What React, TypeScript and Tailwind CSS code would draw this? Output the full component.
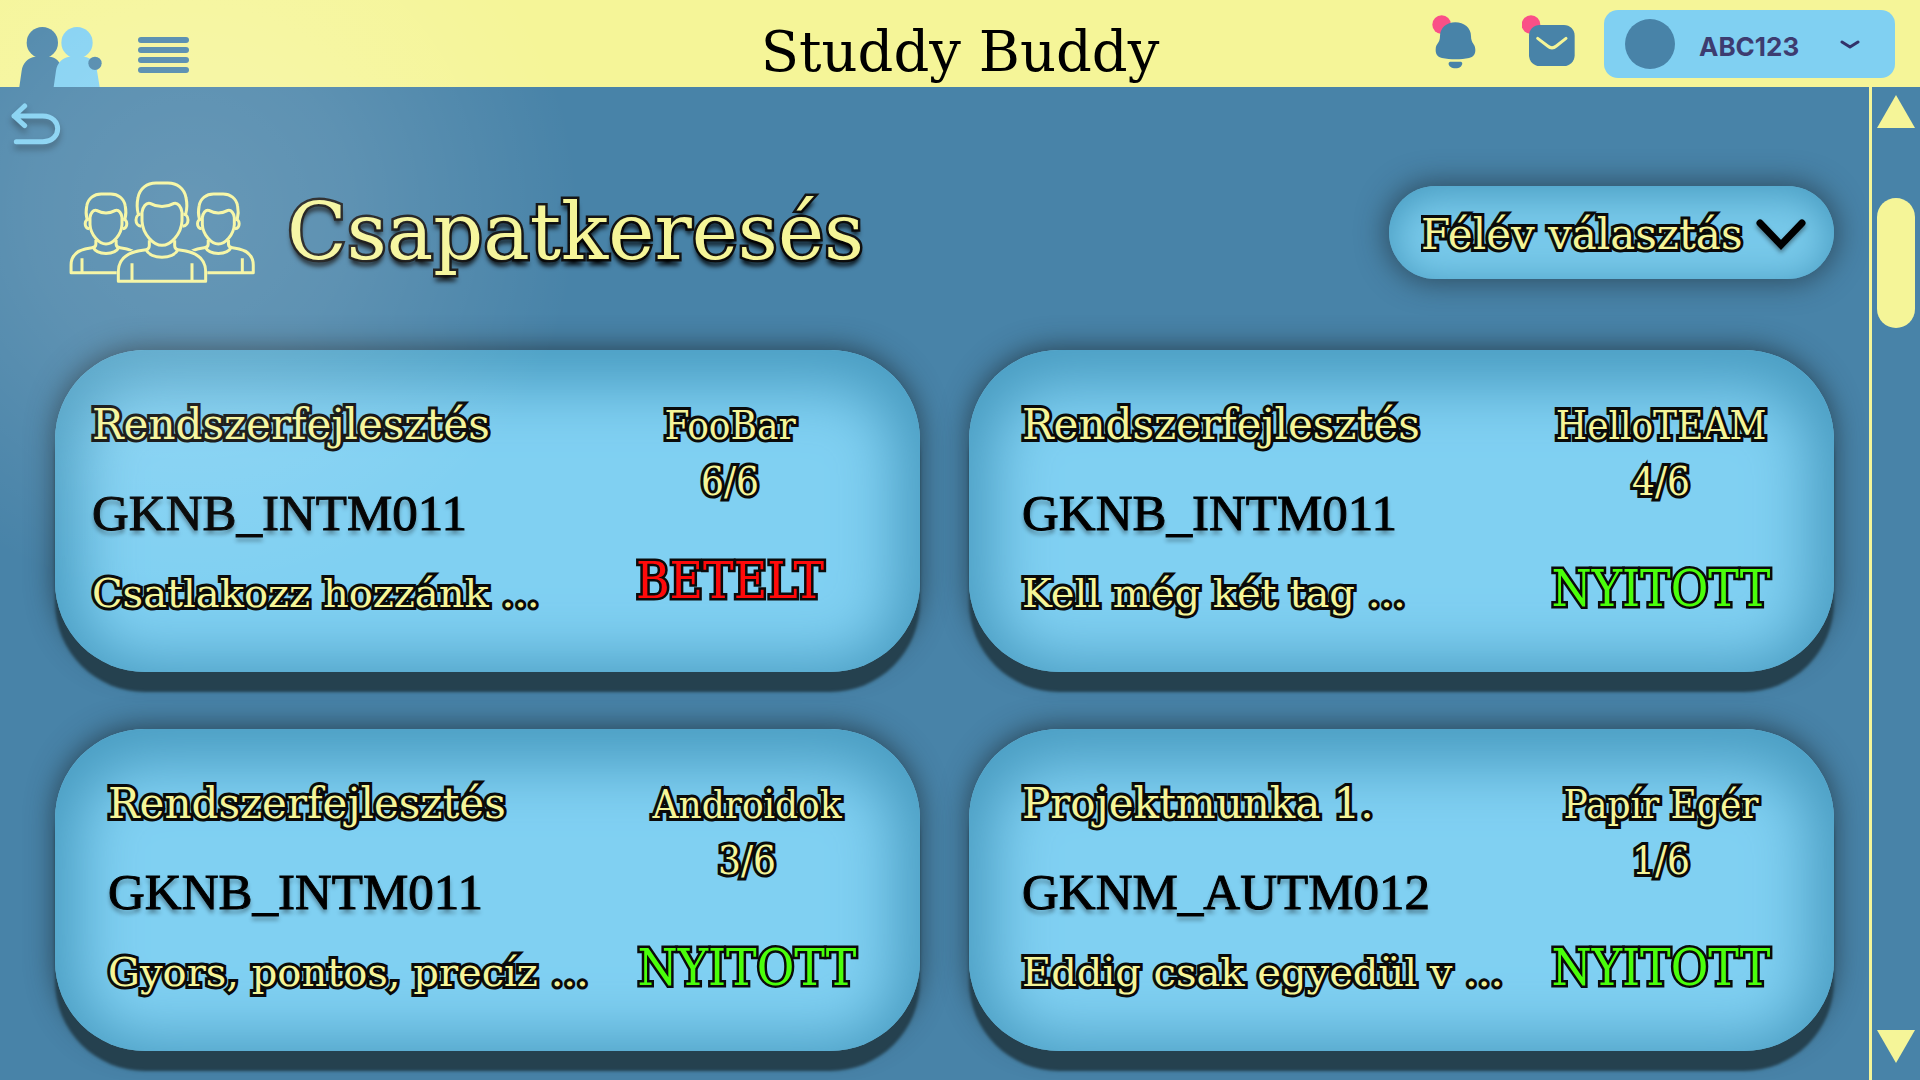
import React from "react";

const HAND = "font-['DejaVu_Serif',serif]";
const HAND_NARROW = "font-['DejaVu_Serif_Condensed','DejaVu_Serif',serif]";
const OUTLINE = "[-webkit-text-stroke:6px_#0a0a0a] [paint-order:stroke_fill]";

type Team = {
  subject: string;
  code: string;
  note: string;
  team: string;
  members: string;
  open: boolean;
};

const teams: Team[] = [
  { subject: "Rendszerfejlesztés", code: "GKNB_INTM011", note: "Csatlakozz hozzánk ...", team: "FooBar", members: "6/6", open: false },
  { subject: "Rendszerfejlesztés", code: "GKNB_INTM011", note: "Kell még két tag ...", team: "HelloTEAM", members: "4/6", open: true },
  { subject: "Rendszerfejlesztés", code: "GKNB_INTM011", note: "Gyors, pontos, precíz ...", team: "Androidok", members: "3/6", open: true },
  { subject: "Projektmunka 1.", code: "GKNM_AUTM012", note: "Eddig csak egyedül v ...", team: "Papír Egér", members: "1/6", open: true },
];

function Logo() {
  return (
    <svg className="h-[60px] w-[84px]" viewBox="54 81 252 180" aria-label="Studdy Buddy">
      <g fill="#4883a8">
        <circle cx="127" cy="128" r="47" />
        <path d="M58 261 L65 212 C68 190 84 172 106 170 H148 C164 171 176 180 184 198 V261Z" />
      </g>
      <g fill="#80d0f2">
        <circle cx="231" cy="128" r="47" />
        <path d="M161 261 L168 212 C171 190 187 172 209 170 H252 C274 172 288 190 291 212 L299 261Z" />
      </g>
      <circle cx="285" cy="190" r="20" fill="#4883a8" />
    </svg>
  );
}

function Student({ scale }: { scale: number }) {
  const w = 9 / scale;
  return (
    <g transform={`scale(${scale})`} fill="none" stroke="#f5f598" strokeWidth={w} strokeLinejoin="round">
      <path d="M-71 98 C-76 80 -75 62 -72 48 C-67 20 -45 4 -18 4 H18 C45 4 67 20 72 48 C75 62 76 80 71 98" />
      <path d="M-60 92 C-58 76 -48 62 -36 65 C-12 78 12 78 36 65 C48 62 58 76 60 92 V118 C58 158 25 191 0 191 C-25 191 -58 158 -60 118Z" />
      <path d="M-64 98 C-82 98 -84 132 -62 134 M64 98 C82 98 84 132 62 134" />
      <path d="M-38 176 V192 C-38 202 -44 204 -53 205 C-100 210 -131 228 -131 270 V299 H131 V270 C131 228 100 210 53 205 C44 204 38 202 38 192 V176" />
      <path d="M-48 204 C-34 234 34 234 48 204" />
      <path d="M-90 245 V299 M90 245 V299" />
    </g>
  );
}

function GroupIcon() {
  return (
    <svg className="h-[102px] w-[186px] shrink-0" viewBox="55 66 558 306" aria-hidden="true">
      <defs>
        <clipPath id="sides">
          <path d="M50 60 H248 V272 C215 285 200 305 198 330 V372 H50Z M618 60 H422 V272 C455 285 468 305 470 330 V372 H618Z" />
        </clipPath>
      </defs>
      <g clipPath="url(#sides)">
        <g transform="translate(166 102)">
          <Student scale={0.8} />
        </g>
        <g transform="translate(503 102)">
          <Student scale={0.8} />
        </g>
      </g>
      <g transform="translate(334 68)">
        <Student scale={1} />
      </g>
    </svg>
  );
}

function Header() {
  return (
    <header className="grid h-[87px] grid-cols-[1fr_auto_1fr] bg-[#f5f598]">
      <div className="flex items-end pl-[18px]">
        <Logo />
        <button type="button" aria-label="Menü" className="mb-[14px] ml-9 flex w-[51px] flex-col gap-1">
          <span className="h-1.5 w-full rounded-full bg-[#4883a8]" />
          <span className="h-1.5 w-full rounded-full bg-[#4883a8]" />
          <span className="h-1.5 w-full rounded-full bg-[#4883a8]" />
          <span className="h-1.5 w-full rounded-full bg-[#4883a8]" />
        </button>
      </div>
      <p className={`${HAND} pt-[17px] text-[56px] leading-[70px] text-black`}>Studdy Buddy</p>
      <div className="flex items-start justify-end pr-[25px] pt-[10px]">
        <button type="button" aria-label="Értesítések" className="mt-1">
          <svg className="h-[56px] w-[46px]" viewBox="96 42 138 168">
            <circle cx="125" cy="74" r="28" fill="#fa5087" />
            <path d="M166 67 C140 67 120 84 120 108 C120 132 107 128 107 150 C107 164 113 171 126 174 C150 179 184 179 207 174 C220 171 226 164 226 150 C226 130 213 132 213 108 C213 84 192 67 166 67Z M150 185 H183 C190 188 186 196 182 200 C174 206 159 206 151 200 C146 196 143 188 150 185Z" fill="#4883a8" />
          </svg>
        </button>
        <button type="button" aria-label="Üzenetek" className="ml-11 mt-1">
          <svg className="h-[56px] w-[54px]" viewBox="366 42 162 168">
            <circle cx="393" cy="74" r="28" fill="#fa5087" />
            <rect x="387" y="75" width="137" height="123" rx="32" fill="#4883a8" />
            <path d="M413 115 L443 138 Q456 149 469 138 L498 115" fill="none" stroke="#f5f598" strokeWidth="9" strokeLinecap="round" />
          </svg>
        </button>
        <button type="button" className="ml-7 flex h-[68px] w-[291px] items-center rounded-[14px] bg-[#80d0f2] pl-[21px] pr-[35px]">
          <span className="size-[50px] rounded-full bg-[#4883a8]" />
          <span className="ml-6 mt-1 font-['Inter',sans-serif] text-[26px] font-bold text-[#3d3c70]">ABC123</span>
          <svg className="ml-auto mt-0.5 h-3 w-5" viewBox="0 0 20 12" fill="none" stroke="#32326a" strokeWidth="3" strokeLinecap="round" strokeLinejoin="round" aria-hidden="true">
            <path d="M2 3 L10 8 L18 3" />
          </svg>
        </button>
      </div>
    </header>
  );
}

function TeamCard({ item, first }: { item: Team; first: boolean }) {
  return (
    <article
      className={`flex h-[322px] justify-between rounded-[90px] bg-[#80d0f2] pt-[47px] shadow-[0_20px_3px_#25414f,0_-2px_28px_rgba(30,45,55,0.75),inset_0_12px_60px_24px_#4a9dc2] ${first ? "pl-[37px] pr-[70px]" : "pl-[53px] pr-[53px]"}`}
    >
      <div className={`${HAND} whitespace-nowrap text-[42px] leading-[56px] text-[#f5f598]`}>
        <h2 className={OUTLINE}>{item.subject}</h2>
        <p className="mt-8 font-['Liberation_Serif',serif] text-[51px] text-black [-webkit-text-stroke:1px_black] [text-shadow:0_4px_4px_rgba(0,0,0,0.4)]">
          {item.code}
        </p>
        <p className={`mt-6 text-[40px] ${OUTLINE}`}>{item.note}</p>
      </div>
      <div className={`${HAND_NARROW} w-[240px] whitespace-nowrap text-center text-[40px] leading-[56px] text-[#f5f598]`}>
        <p className={OUTLINE}>{item.team}</p>
        <p className={OUTLINE}>{item.members}</p>
        <p
          className={`text-[51px] leading-[64px] [-webkit-text-stroke:5px_#0a0a0a] [paint-order:stroke_fill] ${first ? "mt-10" : "mt-12"} ${item.open ? "text-[#4aff0b]" : "text-[#ff0a0a]"}`}
        >
          {item.open ? "NYITOTT" : "BETELT"}
        </p>
      </div>
    </article>
  );
}

function Scrollbar() {
  return (
    <aside className="flex w-[51px] shrink-0 flex-col items-center justify-between border-l-[3px] border-[#f5f598] pb-[17px] pt-2">
      <div className="flex flex-col items-center">
        <button type="button" aria-label="Fel">
          <svg className="block h-[33px] w-[38px]" viewBox="0 0 38 33" fill="#f5f598">
            <path d="M19 0 L38 33 H0Z" />
          </svg>
        </button>
        <div className="mt-[70px] h-[130px] w-[38px] rounded-full bg-[#f5f598]" />
      </div>
      <button type="button" aria-label="Le">
        <svg className="block h-[33px] w-[38px]" viewBox="0 0 38 33" fill="#f5f598">
          <path d="M19 33 L38 0 H0Z" />
        </svg>
      </button>
    </aside>
  );
}

export default function App() {
  return (
    <div className="relative flex min-h-screen flex-col overflow-hidden bg-[#4883a8]">
      <Header />
      <div className="flex flex-1">
        <main className="flex-1 pl-[55px] pr-[35px] pt-4">
          <button type="button" aria-label="Vissza" className="-ml-[44px] block">
            <svg className="h-[42px] w-[50px] drop-shadow-[0_5px_3px_rgba(0,0,0,0.35)]" viewBox="33 306 150 126" fill="none" stroke="#80d0f2" strokeWidth="15" strokeLinecap="round" strokeLinejoin="round" aria-hidden="true">
              <path d="M74 315 L42 345 L74 374 M42 345 H128 C188 345 188 422 128 422 H49" />
            </svg>
          </button>
          <div className="mt-8 flex items-center">
            <div className="ml-3.5">
              <GroupIcon />
            </div>
            <h1 className={`${HAND} ml-8 text-[78px] leading-[110px] text-[#f5f598] [-webkit-text-stroke:5px_#141414] [paint-order:stroke_fill] [text-shadow:0_6px_5px_#000]`}>
              Csapatkeresés
            </h1>
            <div className="relative ml-auto">
              <select
                aria-label="Félév választás"
                defaultValue=""
                className={`${HAND} ${OUTLINE} h-[93px] w-[445px] appearance-none rounded-full bg-[#78c9ea] pl-[32px] pr-[80px] pt-1 text-[42px] text-[#f5f598] shadow-[0_0_28px_4px_rgba(30,45,55,0.6),inset_0_6px_36px_4px_#4a9dc2]`}
              >
                <option value="">Félév választás</option>
              </select>
              <svg className="pointer-events-none absolute right-7 top-[33px] h-8 w-[50px] drop-shadow-[0_3px_2px_rgba(0,0,0,0.4)]" viewBox="0 0 50 32" fill="none" stroke="#000" strokeWidth="7" strokeLinecap="round" aria-hidden="true">
                <path d="M4 4 L25 26 L46 4" />
              </svg>
            </div>
          </div>
          <section className="mt-[63px] grid grid-cols-2 gap-x-[49px] gap-y-[57px] pb-7">
            {teams.map((item, i) => (
              <TeamCard key={i} item={item} first={i === 0} />
            ))}
          </section>
        </main>
        <Scrollbar />
      </div>
      <div className="pointer-events-none absolute inset-0 bg-[radial-gradient(circle_at_190px_210px,rgba(255,255,255,0.17),rgba(255,255,255,0.12)_160px,transparent_390px)]" />
    </div>
  );
}
